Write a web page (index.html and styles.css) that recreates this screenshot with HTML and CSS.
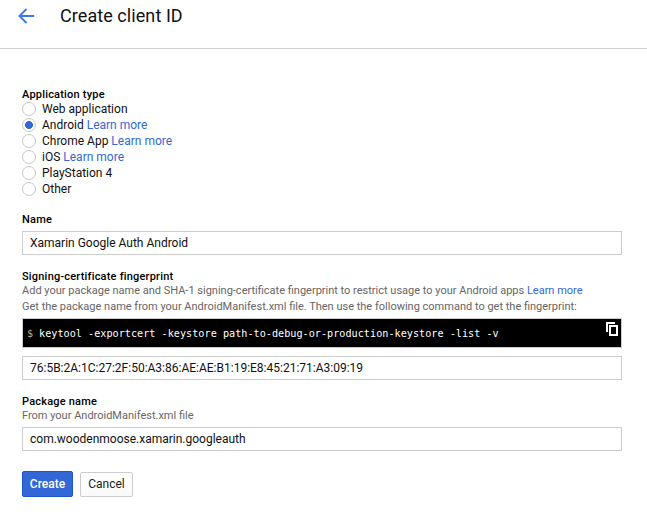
FILE: index.html
```html
<!DOCTYPE html>
<html lang="en">
<head>
<meta charset="utf-8">
<title>Create client ID</title>
<link rel="stylesheet" href="styles.css">
</head>
<body>
<header class="header">
  <svg class="back" viewBox="0 0 18 16" width="18" height="16"><path d="M16.2 8H2M8.5 1 1.5 8l7 7" fill="none" stroke="#3b78e7" stroke-width="1.9"/></svg>
  <h1 class="title">Create client ID</h1>
</header>
<main class="form">
  <h2 class="label">Application type</h2>
  <div class="options">
    <label class="option"><span class="radio"></span><span>Web application</span></label>
    <label class="option"><span class="radio selected"></span><span>Android <a>Learn more</a></span></label>
    <label class="option"><span class="radio"></span><span>Chrome App <a>Learn more</a></span></label>
    <label class="option"><span class="radio"></span><span>iOS <a>Learn more</a></span></label>
    <label class="option"><span class="radio"></span><span>PlayStation 4</span></label>
    <label class="option"><span class="radio"></span><span>Other</span></label>
  </div>
  <h2 class="label name-label">Name</h2>
  <div class="field name-field">Xamarin Google Auth Android</div>
  <h2 class="label cert-label">Signing-certificate fingerprint</h2>
  <p class="hint hint-first">Add your package name and SHA-1 signing-certificate fingerprint to restrict usage to your Android apps <a>Learn more</a></p>
  <p class="hint hint-second">Get the package name from your AndroidManifest.xml file. Then use the following command to get the fingerprint:</p>
  <div class="command">
    <span class="prompt">$</span><code>keytool -exportcert -keystore path-to-debug-or-production-keystore -list -v</code>
    <svg class="copy" viewBox="0 0 12 14" width="12" height="14"><path d="M0 0h9v2H2v8H0z" fill="#fff"/><path d="M4 4h7v9H4z" fill="none" stroke="#fff" stroke-width="2"/></svg>
  </div>
  <div class="field cert-field">76:5B:2A:1C:27:2F:50:A3:86:AE:AE:B1:19:E8:45:21:71:A3:09:19</div>
  <h2 class="label package-label">Package name</h2>
  <p class="hint package-hint">From your AndroidManifest.xml file</p>
  <div class="field package-field">com.woodenmoose.xamarin.googleauth</div>
  <div class="actions">
    <button class="button primary">Create</button>
    <button class="button">Cancel</button>
  </div>
</main>
</body>
</html>
```
FILE: styles.css
```css
* { box-sizing: border-box; }
body {
  margin: 0;
  background: #fff;
  color: #111;
  font: 12px/16px Roboto, sans-serif;
}
h1, h2, p { margin: 0; }
a { color: #3367d6; }
.header {
  display: flex;
  height: 49px;
  padding: 6px 0 0 18px;
  border-bottom: 1px solid #d0d0d0;
}
.back { margin-top: 2px; }
.title {
  margin-left: 24px;
  font-size: 18px;
  font-weight: 400;
  line-height: 20px;
  letter-spacing: 0.07px;
}
.form { width: 600px; margin: 38px 0 0 22px; }
.label {
  font-size: 11px;
  font-weight: 500;
  line-height: 16px;
  letter-spacing: 0.2px;
  color: #000;
}
.options { margin-top: -2px; }
.option {
  display: flex;
  align-items: center;
  gap: 6px;
  height: 16px;
  white-space: nowrap;
}
.radio {
  width: 14px;
  height: 14px;
  border: 1px solid #c8c8c8;
  border-radius: 50%;
}
.selected { background: radial-gradient(circle, #3367d6 3.6px, transparent 4.3px); }
.field {
  height: 24px;
  padding: 0 7px;
  border: 1px solid #ccc;
  line-height: 22px;
  white-space: nowrap;
}
.name-label { margin-top: 15px; }
.name-field { margin-top: 3px; }
.cert-label { margin-top: 14px; }
.hint {
  font-size: 11px;
  line-height: 16px;
  color: #666;
  white-space: nowrap;
}
.hint-first { margin-top: -2px; }
.command {
  display: flex;
  height: 30px;
  margin-top: 3px;
  padding: 0 3px 0 4px;
  border: 1px solid #ccc;
  background: #000;
  color: #fff;
  font: 10.17px/29px "DejaVu Sans Mono", monospace;
}
.command code { font: inherit; letter-spacing: 0.015px; white-space: nowrap; }
.prompt { width: 12px; color: #aaa; }
.copy { margin: 3px 0 0 auto; }
.cert-field { margin-top: 8px; }
.package-label { margin-top: 14px; }
.package-hint { margin-top: -2px; }
.package-field { margin-top: 3px; }
.actions {
  display: flex;
  align-items: flex-end;
  gap: 7px;
  height: 26px;
  margin-top: 20px;
}
.button {
  width: 53px;
  height: 25px;
  padding: 0 0 1px;
  border: 1px solid #ccc;
  border-radius: 2px;
  background: linear-gradient(#fff, #fafafa);
  color: #222;
  font: 12px/22px Roboto, sans-serif;
}
.primary {
  width: 51px;
  height: 26px;
  border-color: #1a56c5;
  background: #3367d6;
  color: #fff;
  font-weight: 500;
}
```
